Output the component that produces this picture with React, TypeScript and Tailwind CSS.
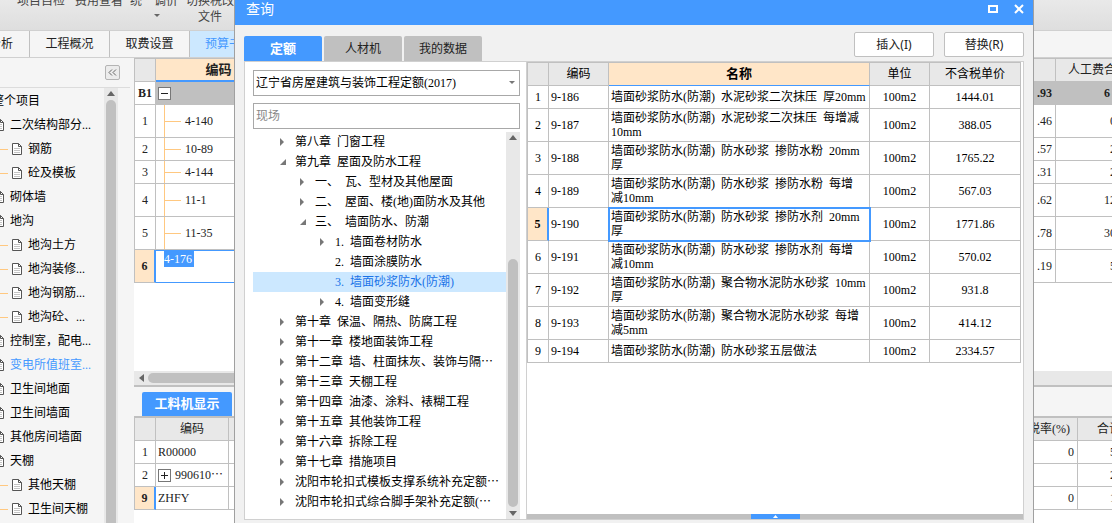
import { useState } from "react";

const simple = "font-['Liberation_Serif','Noto_Sans_CJK_SC',serif]";

const projectTree = [
    { label: "整个项目", level: 0 },
    { label: "二次结构部分...", level: 1 },
    { label: "钢筋", level: 2 },
    { label: "砼及模板", level: 2 },
    { label: "砌体墙", level: 1 },
    { label: "地沟", level: 1 },
    { label: "地沟土方", level: 2 },
    { label: "地沟装修...", level: 2 },
    { label: "地沟钢筋...", level: 2 },
    { label: "地沟砼、...", level: 2 },
    { label: "控制室，配电...", level: 1 },
    { label: "变电所值班室...", level: 1, active: true },
    { label: "卫生间地面", level: 1 },
    { label: "卫生间墙面", level: 1 },
    { label: "其他房间墙面", level: 1 },
    { label: "天棚", level: 1 },
    { label: "其他天棚", level: 2 },
    { label: "卫生间天棚", level: 2 },
];

const budgetRows = [
    { no: "1", code: "4-140", rate: ".46", labour: "0", tall: true },
    { no: "2", code: "10-89", rate: ".57", labour: "2", tall: false },
    { no: "3", code: "4-144", rate: ".31", labour: "2", tall: false },
    { no: "4", code: "11-1", rate: ".62", labour: "12", tall: true },
    { no: "5", code: "11-35", rate: ".78", labour: "30", tall: true },
];

const resourceRows = [
    { no: "1", code: "R00000", tax: "0", total: "5" },
    { no: "2", code: "990610⋯", tax: "", total: "2", expandable: true },
    { no: "9", code: "ZHFY", tax: "0", total: "1", active: true },
];

const chapters = [
    { label: "第八章 门窗工程", level: 0, state: "closed" },
    { label: "第九章 屋面及防水工程", level: 0, state: "open" },
    { label: "一、 瓦、型材及其他屋面", level: 1, state: "closed" },
    { label: "二、 屋面、楼(地)面防水及其他", level: 1, state: "closed" },
    { label: "三、 墙面防水、防潮", level: 1, state: "open" },
    { label: "1. 墙面卷材防水", level: 2, state: "closed" },
    { label: "2. 墙面涂膜防水", level: 2, state: "leaf" },
    { label: "3. 墙面砂浆防水(防潮)", level: 2, state: "leaf" },
    { label: "4. 墙面变形缝", level: 2, state: "closed" },
    { label: "第十章 保温、隔热、防腐工程", level: 0, state: "closed" },
    { label: "第十一章 楼地面装饰工程", level: 0, state: "closed" },
    { label: "第十二章 墙、柱面抹灰、装饰与隔⋯", level: 0, state: "closed" },
    { label: "第十三章 天棚工程", level: 0, state: "closed" },
    { label: "第十四章 油漆、涂料、裱糊工程", level: 0, state: "closed" },
    { label: "第十五章 其他装饰工程", level: 0, state: "closed" },
    { label: "第十六章 拆除工程", level: 0, state: "closed" },
    { label: "第十七章 措施项目", level: 0, state: "closed" },
    { label: "沈阳市轮扣式模板支撑系统补充定额⋯", level: 0, state: "closed" },
    { label: "沈阳市轮扣式综合脚手架补充定额(⋯", level: 0, state: "closed" },
];

const quotas = [
    { code: "9-186", name: ["墙面砂浆防水(防潮) 水泥砂浆二次抹压 厚20mm"], price: "1444.01" },
    { code: "9-187", name: ["墙面砂浆防水(防潮) 水泥砂浆二次抹压 每增减", "10mm"], price: "388.05" },
    { code: "9-188", name: ["墙面砂浆防水(防潮) 防水砂浆 掺防水粉 20mm", "厚"], price: "1765.22" },
    { code: "9-189", name: ["墙面砂浆防水(防潮) 防水砂浆 掺防水粉 每增", "减10mm"], price: "567.03" },
    { code: "9-190", name: ["墙面砂浆防水(防潮) 防水砂浆 掺防水剂 20mm", "厚"], price: "1771.86" },
    { code: "9-191", name: ["墙面砂浆防水(防潮) 防水砂浆 掺防水剂 每增", "减10mm"], price: "570.02" },
    { code: "9-192", name: ["墙面砂浆防水(防潮) 聚合物水泥防水砂浆 10mm", "厚"], price: "931.8" },
    { code: "9-193", name: ["墙面砂浆防水(防潮) 聚合物水泥防水砂浆 每增", "减5mm"], price: "414.12" },
    { code: "9-194", name: ["墙面砂浆防水(防潮) 防水砂浆五层做法"], price: "2334.57" },
];

// spaces in the quota names are half a character wide
const halfWidth = (text: string) => text.replace(/ /g, "\u2002");

const cell = "border-r border-b border-[#c0c0c0] p-0";
const head = "border-r border-b border-[#c0c0c0] bg-[#e8e8e8] p-0 font-normal";

function DocIcon() {
    return (
        <svg className="h-3 w-[10px] shrink-0" viewBox="0 0 10 12" fill="none">
            <path d="M.5 .5H6.5L9.5 3.5V11.5H.5Z" fill="#fff" stroke="#555" />
            <path d="M6.5 .5V3.5H9.5" stroke="#555" />
            <path d="M2 5.5H8M2 7.5H8M2 9.5H8" stroke="#c4c4c4" />
        </svg>
    );
}

function Triangle({ dir, className = "" }: { dir: "up" | "down" | "left"; className?: string }) {
    const d = { up: "M0 5L4 0L8 5Z", down: "M0 0L4 5L8 0Z", left: "M6 0L1 4L6 8Z" }[dir];
    return (
        <svg
            className={className}
            width={dir === "left" ? 6 : 8}
            height={dir === "left" ? 8 : 5}
            viewBox={dir === "left" ? "0 0 6 8" : "0 0 8 5"}
            preserveAspectRatio="none"
            fill="currentColor"
        >
            <path d={d} />
        </svg>
    );
}

function NodeArrow({ state }: { state: string }) {
    return (
        <svg className="h-2 w-[15px] shrink-0" viewBox="0 0 15 8" fill="#777">
            {state === "closed" && <path d="M0 0L4 4L0 8Z" />}
            {state === "open" && <path d="M6 1V7H0Z" />}
        </svg>
    );
}

function ToggleBox({ plus }: { plus?: boolean }) {
    return (
        <svg className="h-[13px] w-[13px] shrink-0" viewBox="0 0 13 13" fill="none" stroke="#777">
            <rect x=".5" y=".5" width="12" height="12" fill="#fff" />
            <path d="M3 6.5H10" stroke="#222" />
            {plus && <path d="M6.5 3V10" stroke="#222" />}
        </svg>
    );
}

function Ribbon() {
    return (
        <header className="flex h-[31px] shrink-0 items-start border-b border-[#d0d0d0] bg-linear-to-b from-[#e9e9e9] to-[#dedede] pl-[17px] leading-4 text-[#444]">
            <div className="-mt-[7px] flex whitespace-nowrap">
                <button className="h-4 w-[58px] text-left">项目自检</button>
                <button className="h-4 w-[55px] text-left">费用查看</button>
                <button className="h-4 w-6 text-left">统</button>
                <button className="flex h-8 w-8 flex-col items-start">
                    调价
                    <Triangle dir="down" className="mt-[5px] h-[3px] w-[6px] text-[#666]" />
                </button>
                <button className="h-8 w-12 text-center">
                    切换税改
                    <br />
                    文件
                </button>
            </div>
        </header>
    );
}

function PageTabs() {
    return (
        <nav className="flex h-[27px] shrink-0 overflow-hidden border-b border-[#d0d0d0] bg-[#f5f5f5] whitespace-nowrap">
            <button className="flex w-[30px] shrink-0 items-center justify-end border-r border-[#c0c0c0] pr-4">分析</button>
            <button className="w-20 shrink-0 border-r border-[#c0c0c0]">工程概况</button>
            <button className="w-20 shrink-0 border-r border-[#c0c0c0]">取费设置</button>
            <button className="w-20 shrink-0 bg-[#cce8ff] pl-[15px] text-left text-[#4499ff]">预算书</button>
        </nav>
    );
}

function Sidebar() {
    return (
        <aside className="flex w-[134px] shrink-0 flex-col bg-[#f5f5f5]">
            <div className="mr-1 flex h-[30px] shrink-0 items-center justify-end border-b border-[#dcdcdc] pr-[10px]">
                <button
                    aria-label="收起"
                    className="flex h-[15px] w-[15px] items-center justify-center rounded-xs border border-[#b4b4b4] bg-[#ececec]"
                >
                    <svg width="9" height="7" viewBox="0 0 9 7" fill="none" stroke="#666">
                        <path d="M4 .5L1 3.5L4 6.5M8 .5L5 3.5L8 6.5" />
                    </svg>
                </button>
            </div>
            <div className="flex min-h-0 flex-1">
                <ul className="min-w-0 flex-1 overflow-hidden pt-px whitespace-nowrap">
                    {projectTree.map((item) => (
                        <li key={item.label} className="h-6">
                            <a
                                href="#"
                                className={`flex h-6 items-center gap-[6px] ${item.level === 2 ? "" : item.level === 1 ? "-ml-[6px]" : "-ml-2"} ${item.active ? "text-[#4499ff]" : "text-black"}`}
                            >
                                {item.level === 2 && <span className="-mr-0.5 h-px w-2 bg-[#ffc880]" />}
                                {item.level > 0 && <DocIcon />}
                                {item.label}
                            </a>
                        </li>
                    ))}
                </ul>
                <div className="mr-4 flex w-[14px] shrink-0 flex-col items-center bg-[#e8e8e8] pt-[3px]">
                    <Triangle dir="up" className="text-[#666]" />
                    <div className="mt-1 w-[10px] flex-1 rounded-t-full bg-[#c0c0c0]" />
                </div>
            </div>
        </aside>
    );
}

function BudgetTable() {
    return (
        <table className="w-[calc(100%+5px)] table-fixed border-separate border-spacing-0 border-t border-l border-[#c0c0c0] bg-white text-[#222]">
            <colgroup>
                <col className="w-[21px]" />
                <col className="w-[126px]" />
                <col />
                <col className="w-[61px]" />
            </colgroup>
            <thead>
                <tr className="h-[23px]">
                    <th className={head}></th>
                    <th className="border-r border-b-2 border-r-[#c0c0c0] border-b-[#4499ff] bg-[#ffe6c8] p-0 text-[13px] font-bold">编码</th>
                    <th className={head}></th>
                    <th className={`${head} pl-3 text-left whitespace-nowrap`}>人工费合</th>
                </tr>
            </thead>
            <tbody>
                <tr className="h-[23px] bg-[#c0c0c0] font-bold">
                    <td className={`${cell} bg-white text-center`}>B1</td>
                    <td className={cell}>
                        <div className="flex pl-0.5">
                            <ToggleBox />
                        </div>
                    </td>
                    <td className={`${cell} pr-[3px] text-right`}>.93</td>
                    <td className={`${cell} text-right`}>6&nbsp;&nbsp;</td>
                </tr>
                {budgetRows.map((row) => (
                    <tr key={row.no}>
                        <td className={`${cell} text-center`}>{row.no}</td>
                        <td className={cell}>
                            <div className={`flex items-center pl-2 ${row.tall ? "h-8" : "h-[22px]"}`}>
                                <span className="w-px self-stretch bg-[#ffc880]" />
                                <span className="mr-1 h-px w-4 bg-[#ffc880]" />
                                {row.code}
                            </div>
                        </td>
                        <td className={`${cell} pr-[3px] text-right`}>{row.rate}</td>
                        <td className={`${cell} text-right`}>{row.labour}</td>
                    </tr>
                ))}
                <tr className="h-[33px]">
                    <td className="border-r-2 border-b border-r-[#4499ff] border-b-[#c0c0c0] bg-[#ffe6c8] p-0 text-center font-bold">6</td>
                    <td className="border border-l-0 border-[#4499ff] p-0 pl-2 align-top">
                        <input aria-label="编码" defaultValue="4-176" className="block h-4 w-[30px] bg-[#4499ff] text-white outline-none" />
                    </td>
                    <td className={`${cell} pr-[3px] text-right`}>.19</td>
                    <td className={`${cell} text-right`}>5</td>
                </tr>
            </tbody>
        </table>
    );
}

function ResourcePanel() {
    return (
        <section className="h-[138px] shrink-0 border-t-2 border-[#c0c0c0] bg-white">
            <div className="flex h-[31px] items-end border-b-2 border-[#c0c0c0] bg-[#f5f5f5] pl-2">
                <button className="h-6 w-[90px] rounded-t-xs bg-[#4499ff] text-[13px] font-bold text-white">工料机显示</button>
            </div>
            <table className="w-[calc(100%+5px)] table-fixed border-separate border-spacing-0 border-l border-[#c0c0c0] text-[#222]">
                <colgroup>
                    <col className="w-[21px]" />
                    <col className="w-[73px]" />
                    <col />
                    <col className="w-[57px]" />
                    <col className="w-[39px]" />
                </colgroup>
                <thead>
                    <tr className="h-[23px]">
                        <th className={head}></th>
                        <th className={head}>编码</th>
                        <th className={head}></th>
                        <th className={`${head} whitespace-nowrap`}>税率(%)</th>
                        <th className={`${head} pl-[19px] text-left whitespace-nowrap`}>合计</th>
                    </tr>
                </thead>
                <tbody>
                    {resourceRows.map((row) => (
                        <tr key={row.no} className="h-[23px]">
                            {row.active ? (
                                <td className="border-r-2 border-b border-r-[#4499ff] border-b-[#c0c0c0] bg-[#ffe6c8] p-0 text-center font-bold">{row.no}</td>
                            ) : (
                                <td className={`${cell} text-center`}>{row.no}</td>
                            )}
                            <td className={cell}>
                                <div className="flex items-center gap-1 pl-0.5 whitespace-nowrap">
                                    {row.expandable && <ToggleBox plus />}
                                    {row.code}
                                </div>
                            </td>
                            <td className={cell}></td>
                            <td className={`${cell} pr-[3px] text-right`}>{row.tax}</td>
                            <td className={`${cell} text-right`}>{row.total}</td>
                        </tr>
                    ))}
                </tbody>
            </table>
        </section>
    );
}

function ChapterTree({ selected, onSelect }: { selected: string; onSelect: (label: string) => void }) {
    return (
        <div className="mt-[3px] flex min-h-0 flex-1">
            <ul className="min-w-0 flex-1 overflow-hidden whitespace-nowrap">
                {chapters.map((item) => (
                    <li key={item.label}>
                        <button
                            onClick={() => onSelect(item.label)}
                            className={`flex h-5 w-full items-center ${item.level === 0 ? "pl-[27px]" : item.level === 1 ? "pl-[47px]" : "pl-[67px]"} ${item.label === selected ? "bg-[#cce8ff] text-[#1a73e8]" : "text-black"}`}
                        >
                            <NodeArrow state={item.state} />
                            {halfWidth(item.label)}
                        </button>
                    </li>
                ))}
            </ul>
            <div className="flex w-[14px] shrink-0 flex-col items-center bg-[#e8e8e8] py-[3px]">
                <Triangle dir="up" className="text-[#666]" />
                <div className="mt-[119px] mb-1 w-[10px] flex-1 rounded-full bg-[#c0c0c0]" />
                <Triangle dir="down" className="text-[#666]" />
            </div>
        </div>
    );
}

function QuotaTable() {
    return (
        <table className="w-full table-fixed border-separate border-spacing-0 border-t border-l border-[#c0c0c0] text-black">
            <colgroup>
                <col className="w-[21px]" />
                <col className="w-[60px]" />
                <col />
                <col className="w-[60px]" />
                <col className="w-[91px]" />
            </colgroup>
            <thead>
                <tr className="h-[23px]">
                    <th className={head}></th>
                    <th className={head}>编码</th>
                    <th className="border-r border-b border-r-[#c0c0c0] border-b-[#4499ff] bg-[#ffe6c8] p-0 text-[13px] font-bold">名称</th>
                    <th className={head}>单位</th>
                    <th className={head}>不含税单价</th>
                </tr>
            </thead>
            <tbody>
                {quotas.map((quota, i) => {
                    const active = quota.code === "9-190";
                    return (
                        <tr key={quota.code} className={quota.name.length > 1 ? "h-[33px]" : "h-[23px]"}>
                            {active ? (
                                <td className="border-r-2 border-b border-r-[#4499ff] border-b-[#c0c0c0] bg-[#ffe6c8] p-0 text-center font-bold">{i + 1}</td>
                            ) : (
                                <td className={`${cell} text-center`}>{i + 1}</td>
                            )}
                            <td className={`${cell} pl-0.5`}>{quota.code}</td>
                            <td className={`${cell} pl-0.5 leading-[14px] whitespace-nowrap ${active ? "outline-2 -outline-offset-1 outline-[#4499ff]" : ""}`}>
                                {quota.name.map((line) => (
                                    <div key={line}>{halfWidth(line)}</div>
                                ))}
                            </td>
                            <td className={`${cell} text-center`}>100m2</td>
                            <td className={`${cell} text-center`}>{quota.price}</td>
                        </tr>
                    );
                })}
            </tbody>
        </table>
    );
}

function QueryDialog() {
    const [tab, setTab] = useState("定额");
    const [chapter, setChapter] = useState("3. 墙面砂浆防水(防潮)");

    return (
        <div
            role="dialog"
            aria-label="查询"
            className="absolute inset-y-0 right-[78px] left-[234px] flex flex-col border-x border-[#a0a0a0] bg-[#f1f1f1]"
        >
            <div className="flex h-[25px] shrink-0 items-start justify-between bg-[#4499ff] pr-[9px] pl-[11px] text-white">
                <h1 className="text-sm leading-5">查询</h1>
                <div className="flex gap-4 pt-1">
                    <button aria-label="最大化">
                        <svg width="10" height="10" viewBox="0 0 10 10" fill="none" stroke="#fff" strokeWidth="2">
                            <path d="M1 2H9V8H1Z" />
                        </svg>
                    </button>
                    <button aria-label="关闭">
                        <svg width="10" height="10" viewBox="0 0 10 10" fill="none" stroke="#fff" strokeWidth="2">
                            <path d="M1 1L9 9M9 1L1 9" />
                        </svg>
                    </button>
                </div>
            </div>

            {/* Tabs and actions */}
            <div className="flex h-9 shrink-0 items-end justify-between pr-[9px] pl-[9px]">
                <div className="flex gap-0.5">
                    {["定额", "人材机", "我的数据"].map((name) => (
                        <button
                            key={name}
                            onClick={() => setTab(name)}
                            className={`h-[25px] w-[78px] rounded-t-xs ${name === tab ? "bg-[#4499ff] text-[13px] font-bold text-white" : "bg-[#c0c0c0] text-[#222]"}`}
                        >
                            {name}
                        </button>
                    ))}
                </div>
                <div className="mb-1 flex gap-[10px] font-['Noto_Sans','Noto_Sans_CJK_SC',sans-serif]">
                    <button className="h-[25px] w-20 rounded-xs border border-[#c0c0c0] bg-white text-[#222]">插入(I)</button>
                    <button className="h-[25px] w-20 rounded-xs border border-[#c0c0c0] bg-white text-[#222]">替换(R)</button>
                </div>
            </div>

            <div className="mx-[9px] mb-[3px] flex min-h-0 flex-1 border border-[#d0d0d0] bg-white">
                <div className="flex w-[282px] shrink-0 flex-col border-r border-[#d0d0d0] pt-2 pr-[6px] pl-2">
                    <div className="relative h-[26px] shrink-0">
                        <select aria-label="定额库" className="h-full w-full appearance-none border border-[#a8a8a8] bg-white pl-0.5 text-black">
                            <option>辽宁省房屋建筑与装饰工程定额(2017)</option>
                        </select>
                        <Triangle dir="down" className="pointer-events-none absolute top-[11px] right-[5px] h-[3px] w-[6px] text-[#777]" />
                    </div>
                    <input
                        aria-label="搜索"
                        placeholder="现场"
                        className="mt-[7px] h-[26px] w-full shrink-0 border border-[#a8a8a8] pl-0.5 placeholder:text-[#888]"
                    />
                    <ChapterTree selected={chapter} onSelect={setChapter} />
                </div>
                <div className="flex min-w-0 flex-1 flex-col">
                    <div className="flex-1 pr-0.5">
                        <QuotaTable />
                    </div>
                    <div className="flex h-[5px] shrink-0 justify-center bg-[#c0c0c0]">
                        <button aria-label="展开" className="flex w-[49px] items-center justify-center bg-[#4499ff] text-white">
                            <Triangle dir="up" className="h-[3px] w-[5px]" />
                        </button>
                    </div>
                </div>
            </div>
        </div>
    );
}

export default function App() {
    return (
        <div className={`relative flex h-screen flex-col overflow-hidden bg-[#f5f5f5] text-[12px] leading-4 text-[#222] ${simple}`}>
            <Ribbon />
            <PageTabs />
            <div className="flex min-h-0 flex-1">
                <Sidebar />
                <main className="flex min-w-0 flex-1 flex-col overflow-hidden">
                    <div className="min-h-0 flex-1 overflow-hidden bg-white">
                        <BudgetTable />
                    </div>
                    <div className="flex h-[14px] shrink-0 items-center bg-[#e8e8e8] pl-1">
                        <Triangle dir="left" className="text-[#666]" />
                        <div className="ml-1 h-[10px] w-[600px] rounded-full bg-[#c0c0c0]" />
                    </div>
                    <ResourcePanel />
                </main>
            </div>
            <QueryDialog />
        </div>
    );
}
